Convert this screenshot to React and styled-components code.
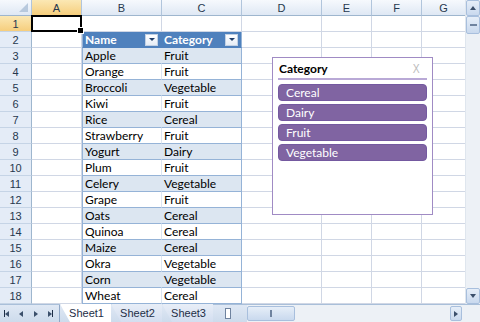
import React from 'react'
import styled, { createGlobalStyle } from 'styled-components'

const GlobalStyle = createGlobalStyle`
  html, body { margin: 0; padding: 0; overflow: hidden; background: #fff; }
  body { font-family: 'Lato', 'Liberation Sans', sans-serif; }
`

const COLS = [
  { key: '', w: 32 },
  { key: 'A', w: 50 },
  { key: 'B', w: 80 },
  { key: 'C', w: 80 },
  { key: 'D', w: 80 },
  { key: 'E', w: 50 },
  { key: 'F', w: 50 },
  { key: 'G', w: 44 },
]

const data = [
  ['Apple', 'Fruit'], ['Orange', 'Fruit'], ['Broccoli', 'Vegetable'], ['Kiwi', 'Fruit'],
  ['Rice', 'Cereal'], ['Strawberry', 'Fruit'], ['Yogurt', 'Dairy'], ['Plum', 'Fruit'],
  ['Celery', 'Vegetable'], ['Grape', 'Fruit'], ['Oats', 'Cereal'], ['Quinoa', 'Cereal'],
  ['Maize', 'Cereal'], ['Okra', 'Vegetable'], ['Corn', 'Vegetable'], ['Wheat', 'Cereal'],
]

const Frame = styled.div`
  width: 480px;
  height: 322px;
  display: flex;
  flex-direction: column;
  overflow: hidden;
  font-size: 12px;
  color: #000;
`
const Main = styled.div`
  display: flex;
  height: 305px;
`
const Sheet = styled.div`
  position: relative;
  width: 466px;
  display: flex;
  flex-direction: column;
  overflow: hidden;
`
const Row = styled.div`
  display: flex;
  height: 16px;
  flex-shrink: 0;
`
const ColHead = styled.div`
  box-sizing: border-box;
  width: ${p => p.$w}px;
  flex-shrink: 0;
  height: 16px;
  display: flex;
  align-items: center;
  justify-content: center;
  font-family: 'Liberation Sans', sans-serif;
  font-size: 11px;
  color: #26384e;
  border-right: 1px solid #b1c5dc;
  border-bottom: 1px solid #9eb6ce;
  background: ${p => p.$active
    ? 'linear-gradient(#fbe8b4, #f6ce7d)'
    : 'linear-gradient(#f6f9fd, #dfe8f4)'};
`
const Corner = styled(ColHead)`
  position: relative;
  &::after {
    content: '';
    position: absolute;
    right: 3px;
    bottom: 3px;
    border-style: solid;
    border-width: 0 0 9px 9px;
    border-color: transparent transparent #b8c9dd transparent;
  }
`
const RowHead = styled.div`
  box-sizing: border-box;
  width: 32px;
  flex-shrink: 0;
  height: 16px;
  display: flex;
  align-items: center;
  justify-content: center;
  font-family: 'Liberation Sans', sans-serif;
  font-size: 11px;
  color: #26384e;
  border-right: 1px solid #9eb6ce;
  border-bottom: 1px solid #c5d4e6;
  background: ${p => p.$active ? 'linear-gradient(#fbe8b4, #f6ce7d)' : '#e4ecf7'};
`
const Cell = styled.div`
  box-sizing: border-box;
  width: ${p => p.$w}px;
  flex-shrink: 0;
  height: 16px;
  padding-left: 2px;
  display: flex;
  align-items: center;
  justify-content: space-between;
  white-space: nowrap;
  overflow: hidden;
  border-right: 1px solid #d0d7e5;
  border-bottom: 1px solid #d0d7e5;
  background: #fff;
`
const TableCell = styled(Cell)`
  background: ${p => p.$head ? '#4f81bd' : p.$band ? '#dce6f1' : '#fff'};
  color: ${p => p.$head ? '#fff' : '#000'};
  font-weight: ${p => p.$head ? 700 : 400};
  border-bottom: 1px solid ${p => p.$head ? '#4f81bd' : '#95b3d7'};
  border-right: 1px solid ${p => p.$last ? '#95b3d7' : p.$head ? '#4f81bd' : '#dce6f1'};
  border-left: ${p => p.$first ? '1px solid #95b3d7' : 'none'};
  padding-right: 3px;
`
const DropBtn = styled.span`
  box-sizing: border-box;
  width: 13px;
  height: 12px;
  background: linear-gradient(#ffffff, #e6edf6);
  border: 1px solid #c2d1e4;
  display: flex;
  align-items: center;
  justify-content: center;
  &::after {
    content: '';
    border-style: solid;
    border-width: 3px 3px 0 3px;
    border-color: #1f3e6b transparent transparent transparent;
  }
`
const Selection = styled.div`
  position: absolute;
  left: 31px;
  top: 15px;
  width: 51px;
  height: 17px;
  box-sizing: border-box;
  border: 2px solid #000;
  pointer-events: none;
  &::after {
    content: '';
    position: absolute;
    right: -4px;
    bottom: -4px;
    width: 5px;
    height: 5px;
    background: #000;
    border: 1px solid #fff;
  }
`
const Slicer = styled.div`
  position: absolute;
  left: 272px;
  top: 57px;
  width: 161px;
  height: 158px;
  box-sizing: border-box;
  background: #fff;
  border: 1px solid #a08bc4;
  padding: 1px 5px 0 5px;
  display: flex;
  flex-direction: column;
`
const SlicerHead = styled.div`
  display: flex;
  justify-content: space-between;
  align-items: center;
  height: 19px;
  padding: 0 2px 0 1px;
  border-bottom: 2px solid #b9a9d6;
  margin-bottom: 4px;
`
const SlicerTitle = styled.span`
  font-weight: 700;
  font-size: 12px;
`
const ClearX = styled.span`
  font-family: 'Liberation Sans', sans-serif;
  font-weight: 300;
  font-size: 13px;
  color: #bcbcbc;
  margin-right: 4px;
  transform: scaleX(0.8);
`
const SlicerItem = styled.div`
  height: 17px;
  margin-bottom: 3px;
  border-radius: 4px;
  background: #8064a2;
  border: 1px solid #7459a0;
  box-sizing: border-box;
  color: #fff;
  font-size: 12px;
  display: flex;
  align-items: center;
  padding-left: 7px;
`
const VScroll = styled.div`
  width: 14px;
  display: flex;
  flex-direction: column;
  background: #edf1f6;
  border-left: 1px solid #dfe6ee;
`
const ScrollBtn = styled.div`
  box-sizing: border-box;
  width: ${p => p.$w || 14}px;
  height: ${p => p.$h || 16}px;
  flex-shrink: 0;
  background: linear-gradient(#e6eef8, #c9d9ee);
  border: 1px solid #a8bfdd;
  border-radius: 2px;
  display: flex;
  align-items: center;
  justify-content: center;
`
const Arrow = styled.span`
  border-style: solid;
  ${p => p.$dir === 'up' && 'border-width: 0 3px 4px 3px; border-color: transparent transparent #3b4f6b transparent;'}
  ${p => p.$dir === 'down' && 'border-width: 4px 3px 0 3px; border-color: #3b4f6b transparent transparent transparent;'}
  ${p => p.$dir === 'right' && 'border-width: 3px 0 3px 4px; border-color: transparent transparent transparent #3b4f6b;'}
  ${p => p.$dir === 'left' && 'border-width: 3px 4px 3px 0; border-color: transparent #3b4f6b transparent transparent;'}
`
const Grip = styled.span`
  width: ${p => p.$v ? 7 : 2}px;
  height: ${p => p.$v ? 2 : 7}px;
  background: #6f839f;
`
const Track = styled.div`
  flex: 1;
`
const BottomBar = styled.div`
  display: flex;
  height: 17px;
  background: linear-gradient(#dfe8f4, #cddbec);
  border-top: 1px solid #a9bfd9;
  align-items: stretch;
`
const NavGroup = styled.div`
  display: flex;
  align-items: center;
  justify-content: space-between;
  width: 60px;
  box-sizing: border-box;
  padding: 0 6px 0 4px;
  border-right: 1px solid #8fa7c6;
`
const NavBtn = styled.span`
  display: flex;
  align-items: center;
`
const Bar = styled.span`
  width: 1px;
  height: 7px;
  background: #1d2e46;
`
const Tabs = styled.div`
  display: flex;
  align-items: stretch;
`
const Tab = styled.div`
  display: flex;
  align-items: center;
  justify-content: center;
  box-sizing: border-box;
  width: 51px;
  margin-top: -1px;
  padding-left: 2px;
  font-family: 'Liberation Sans', sans-serif;
  font-size: 11px;
  color: #1d2e46;
  background: ${p => p.$active ? '#fff' : 'linear-gradient(#e8eef7, #d3def0)'};
  clip-path: polygon(0 0, 100% 0, 100% 100%, 10px 100%, 0 0);
`
const Splitter = styled.div`
  display: flex;
  align-items: center;
  padding-left: 12px;
  width: 34px;
  box-sizing: border-box;
`
const SplitBox = styled.span`
  width: 6px;
  height: 11px;
  box-sizing: border-box;
  background: #fff;
  border: 1px solid #6f839f;
`
const HScroll = styled.div`
  flex: 1;
  display: flex;
  align-items: center;
  background: #edf1f6;
  padding-right: 18px;
`

function NavArrow({ dir, bar }) {
  return (
    <NavBtn>
      {bar === 'left' && <Bar />}
      <Arrow $dir={dir} />
      {bar === 'right' && <Bar />}
    </NavBtn>
  )
}

export default function App() {
  return (
    <Frame>
      <GlobalStyle />
      <Main>
        <Sheet>
          <Row>
            <Corner $w={32} />
            {COLS.slice(1).map(c => (
              <ColHead key={c.key} $w={c.w} $active={c.key === 'A'}>{c.key}</ColHead>
            ))}
          </Row>
          {Array.from({ length: 18 }, (_, i) => {
            const n = i + 1
            return (
              <Row key={n}>
                <RowHead $active={n === 1}>{n}</RowHead>
                {COLS.slice(1).map(c => {
                  if (n >= 2 && (c.key === 'B' || c.key === 'C')) {
                    const head = n === 2
                    const rec = data[n - 3]
                    const text = head ? (c.key === 'B' ? 'Name' : 'Category') : rec[c.key === 'B' ? 0 : 1]
                    return (
                      <TableCell
                        key={c.key}
                        $w={c.w}
                        $head={head}
                        $band={n % 2 === 1}
                        $first={c.key === 'B'}
                        $last={c.key === 'C'}
                      >
                        {text}
                        {head && <DropBtn />}
                      </TableCell>
                    )
                  }
                  return <Cell key={c.key} $w={c.w} />
                })}
              </Row>
            )
          })}
          <Selection />
          <Slicer>
            <SlicerHead>
              <SlicerTitle>Category</SlicerTitle>
              <ClearX>X</ClearX>
            </SlicerHead>
            {['Cereal', 'Dairy', 'Fruit', 'Vegetable'].map(s => (
              <SlicerItem key={s}>{s}</SlicerItem>
            ))}
          </Slicer>
        </Sheet>
        <VScroll>
          <ScrollBtn><Arrow $dir="up" /></ScrollBtn>
          <ScrollBtn $h={18}><Grip $v /></ScrollBtn>
          <Track />
          <ScrollBtn><Arrow $dir="down" /></ScrollBtn>
        </VScroll>
      </Main>
      <BottomBar>
        <NavGroup>
          <NavArrow dir="left" bar="left" />
          <NavArrow dir="left" />
          <NavArrow dir="right" />
          <NavArrow dir="right" bar="right" />
        </NavGroup>
        <Tabs>
          <Tab $active>Sheet1</Tab>
          <Tab>Sheet2</Tab>
          <Tab>Sheet3</Tab>
        </Tabs>
        <Splitter><SplitBox /></Splitter>
        <HScroll>
          <ScrollBtn $w={48} $h={15}><Grip /></ScrollBtn>
          <Track />
          <ScrollBtn $w={12} $h={15}><Arrow $dir="right" /></ScrollBtn>
        </HScroll>
      </BottomBar>
    </Frame>
  )
}
